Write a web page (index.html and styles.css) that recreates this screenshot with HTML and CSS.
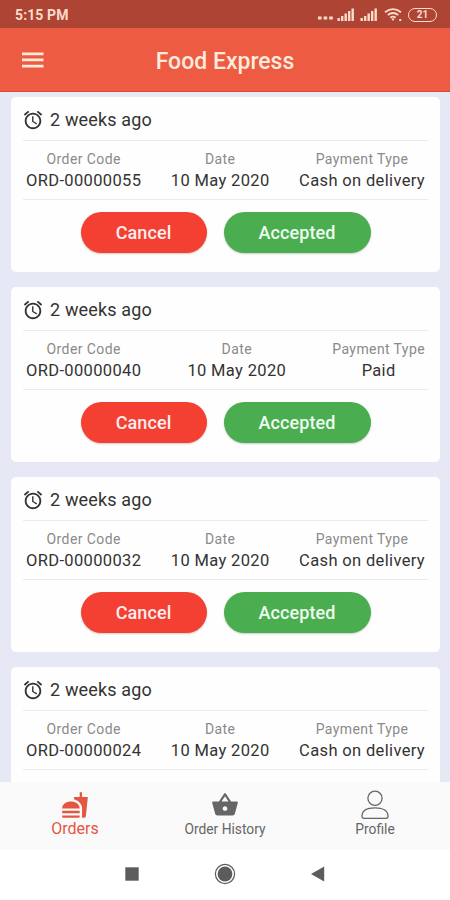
FILE: index.html
```html
<!DOCTYPE html>
<html lang="en">
<head>
    <meta charset="UTF-8">
    <meta name="viewport" content="width=device-width, initial-scale=1.0">
    <title>Food Express</title>
    <link rel="stylesheet" href="styles.css">
</head>
<body>
    <!-- Shared icons -->
    <svg class="icon-defs" aria-hidden="true">
        <symbol id="icon-alarm" viewBox="0 0 24 24">
            <path d="M22 5.72l-4.6-3.86-1.29 1.53 4.6 3.86L22 5.72zM7.88 3.39L6.6 1.86 2 5.71l1.29 1.53 4.59-3.85zM12.5 8H11v6l4.75 2.85.75-1.23-4-2.37V8zM12 4c-4.97 0-9 4.03-9 9s4.02 9 9 9 9-4.03 9-9-4.03-9-9-9zm0 16c-3.87 0-7-3.13-7-7s3.13-7 7-7 7 3.13 7 7-3.13 7-7 7z"/>
        </symbol>
        <symbol id="icon-signal" viewBox="0 0 18 13">
            <path d="M0.5 10h2.4v3H0.5zM4 8h2.4v5H4zM7.5 5.5h2.4V13H7.5zM11 3h2.4v10H11zM14.5 0.5h2.4V13h-2.4z"/>
        </symbol>
    </svg>

    <div class="status-bar">
        <span class="status-time">5:15 PM</span>
        <div class="status-icons">
            <svg class="icon-dots" viewBox="0 0 15 4"><path d="M0 0.5h3.6v3H0zM5.6 0.5h3.6v3H5.6zM11.2 0.5h3.6v3h-3.6z"/></svg>
            <svg class="icon-signal"><use href="#icon-signal"/></svg>
            <svg class="icon-signal"><use href="#icon-signal"/></svg>
            <svg class="icon-wifi" viewBox="0 0 18 13">
                <path class="wifi-arc" d="M1 4.2Q9 -2 17 4.2M3.8 7Q9 3 14.2 7M6.3 9.6Q9 7.6 11.7 9.6"/>
                <path d="M7.3 10.8Q9 9.8 10.7 10.8L9 13zM15.2 11h2v2h-2z"/>
            </svg>
            <div class="battery">21</div>
        </div>
    </div>

    <header class="app-bar">
        <svg class="menu-icon" viewBox="0 0 22 16"><path d="M0 0.5h21.5v2.7H0zM0 6.6h21.5v2.7H0zM0 12.7h21.5v2.7H0z"/></svg>
        <h1>Food Express</h1>
    </header>

    <main class="orders">
        <div class="card">
            <div class="card-time"><svg class="icon-alarm"><use href="#icon-alarm"/></svg><span>2 weeks ago</span></div>
            <div class="card-details">
                <div class="detail"><span class="label">Order Code</span><span class="value">ORD-00000055</span></div>
                <div class="detail"><span class="label">Date</span><span class="value">10 May 2020</span></div>
                <div class="detail"><span class="label">Payment Type</span><span class="value">Cash on delivery</span></div>
            </div>
            <div class="card-actions">
                <button class="btn btn-danger">Cancel</button>
                <button class="btn btn-success">Accepted</button>
            </div>
        </div>

        <div class="card">
            <div class="card-time"><svg class="icon-alarm"><use href="#icon-alarm"/></svg><span>2 weeks ago</span></div>
            <div class="card-details">
                <div class="detail"><span class="label">Order Code</span><span class="value">ORD-00000040</span></div>
                <div class="detail"><span class="label">Date</span><span class="value">10 May 2020</span></div>
                <div class="detail"><span class="label">Payment Type</span><span class="value">Paid</span></div>
            </div>
            <div class="card-actions">
                <button class="btn btn-danger">Cancel</button>
                <button class="btn btn-success">Accepted</button>
            </div>
        </div>

        <div class="card">
            <div class="card-time"><svg class="icon-alarm"><use href="#icon-alarm"/></svg><span>2 weeks ago</span></div>
            <div class="card-details">
                <div class="detail"><span class="label">Order Code</span><span class="value">ORD-00000032</span></div>
                <div class="detail"><span class="label">Date</span><span class="value">10 May 2020</span></div>
                <div class="detail"><span class="label">Payment Type</span><span class="value">Cash on delivery</span></div>
            </div>
            <div class="card-actions">
                <button class="btn btn-danger">Cancel</button>
                <button class="btn btn-success">Accepted</button>
            </div>
        </div>

        <div class="card">
            <div class="card-time"><svg class="icon-alarm"><use href="#icon-alarm"/></svg><span>2 weeks ago</span></div>
            <div class="card-details">
                <div class="detail"><span class="label">Order Code</span><span class="value">ORD-00000024</span></div>
                <div class="detail"><span class="label">Date</span><span class="value">10 May 2020</span></div>
                <div class="detail"><span class="label">Payment Type</span><span class="value">Cash on delivery</span></div>
            </div>
        </div>
    </main>

    <nav class="tab-bar">
        <a class="tab active">
            <svg class="tab-icon" viewBox="0 0 24 24"><path d="M18.06 22.99h1.66c.84 0 1.53-.64 1.63-1.46L23 5.05h-5V1h-1.97v4.05h-4.97l.3 2.34c1.71.47 3.31 1.32 4.27 2.26 1.44 1.42 2.43 2.89 2.43 5.29v8.05zM1 21.99V21h15.03v.99c0 .55-.45 1-1.01 1H2.01c-.56 0-1.01-.45-1.01-1zm15.03-7c0-8-15.03-8-15.03 0h15.03zM1.02 17h15v2h-15z"/></svg>
            <span>Orders</span>
        </a>
        <a class="tab">
            <svg class="tab-icon" viewBox="0 0 24 24"><path d="M17.21 9l-4.38-6.56c-.19-.28-.51-.42-.83-.42-.32 0-.64.14-.83.43L6.79 9H2c-.55 0-1 .45-1 1 0 .09.01.18.04.27l2.54 9.27c.23.84 1 1.46 1.92 1.46h13c.92 0 1.69-.62 1.93-1.46l2.54-9.27L23 10c0-.55-.45-1-1-1h-4.79zM9 9l3-4.4L15 9H9zm3 8c-1.1 0-2-.9-2-2s.9-2 2-2 2 .9 2 2-.9 2-2 2z"/></svg>
            <span>Order History</span>
        </a>
        <a class="tab">
            <svg class="tab-icon tab-icon-line" viewBox="0 0 28 28">
                <circle cx="14" cy="7.3" r="7.1"/>
                <path d="M1 25.2C1 19.5 6.5 16.8 14 16.8S27 19.5 27 25.2Q27 27.3 25 27.3H3Q1 27.3 1 25.2z"/>
            </svg>
            <span>Profile</span>
        </a>
    </nav>

    <div class="system-nav">
        <svg viewBox="0 0 24 24"><path d="M5.3 5.3h13.4v13.4H5.3z"/></svg>
        <svg viewBox="0 0 24 24"><circle cx="12" cy="12" r="7.4"/><circle class="ring" cx="12" cy="12" r="9.6"/></svg>
        <svg viewBox="0 0 24 24"><path d="M5 12L18.2 4.6v14.8z"/></svg>
    </div>
</body>
</html>
```
FILE: styles.css
```css
* {
    box-sizing: border-box;
    margin: 0;
    padding: 0;
}

body {
    font-family: Roboto, sans-serif;
    height: 900px;
    display: flex;
    flex-direction: column;
    overflow: hidden;
    background-color: #e6e9f5;
}

svg {
    display: block;
    flex: none;
    fill: currentColor;
}

.icon-defs {
    display: none;
}

.status-bar {
    height: 28px;
    flex: none;
    padding: 1px 13px 0 15px;
    display: flex;
    justify-content: space-between;
    align-items: center;
    background-color: #ae4434;
    color: #fbdccb;
}

.status-time {
    font-size: 14px;
    font-weight: 700;
    letter-spacing: 0.1px;
}

.status-icons {
    display: flex;
    align-items: center;
}

.icon-dots {
    width: 15px;
    height: 4px;
    margin: 7px 4px 0 0;
}

.icon-signal {
    width: 18px;
    height: 13px;
    margin-right: 5px;
}

.icon-wifi {
    width: 18px;
    height: 13px;
    margin: 0 6px 0 1px;
}

.wifi-arc {
    fill: none;
    stroke: currentColor;
    stroke-width: 1.8;
}

.battery {
    width: 29px;
    height: 14px;
    border: 1.5px solid currentColor;
    border-radius: 7px;
    font-size: 10px;
    font-weight: 700;
    line-height: 11px;
    text-align: center;
}

.app-bar {
    height: 64px;
    flex: none;
    padding-left: 22px;
    padding-right: 22px;
    display: grid;
    grid-template-columns: 22px 1fr 22px;
    align-items: center;
    background-color: #ec5b42;
    border-bottom: 1px solid #db4a33;
    color: #ffeadb;
}

.menu-icon {
    width: 22px;
    height: 16px;
}

.app-bar h1 {
    font-size: 23px;
    font-weight: 500;
    text-align: center;
    padding-top: 3px;
}

.orders {
    flex: 1;
    min-height: 0;
    overflow: hidden;
    padding: 5px 10px 0 11px;
}

.card {
    height: 175px;
    margin-bottom: 15.1px;
    padding: 0 12px;
    border-radius: 5px;
    background-color: #fefefe;
    color: #333;
}

.card-time {
    height: 43px;
    padding-top: 2px;
    display: flex;
    align-items: center;
    gap: 5px;
    font-size: 18px;
    letter-spacing: 0.15px;
}

.icon-alarm {
    width: 22px;
    height: 22px;
    margin: 1px 1px 0 -1px;
}

.card-details {
    height: 60px;
    padding: 8px 3px 0;
    display: flex;
    justify-content: space-between;
    border-top: 1px solid #ebebeb;
    border-bottom: 1px solid #ebebeb;
}

.detail {
    display: flex;
    flex-direction: column;
    align-items: center;
}

.label {
    font-size: 14px;
    line-height: 20px;
    letter-spacing: 0.4px;
    color: #8a8a8a;
}

.value {
    font-size: 16.5px;
    line-height: 24px;
    letter-spacing: 0.35px;
}

.card-actions {
    padding-top: 12px;
    display: flex;
    justify-content: center;
    gap: 17px;
}

.btn {
    height: 41px;
    border: none;
    border-radius: 21px;
    font-family: inherit;
    font-size: 18px;
    font-weight: 500;
    letter-spacing: 0.1px;
    color: #fdeeee;
    cursor: pointer;
    box-shadow: 0 1px 2px rgba(0, 0, 0, 0.2);
}

.btn-danger {
    width: 126px;
    background-color: #f44032;
}

.btn-success {
    width: 147px;
    background-color: #4aae50;
    color: #effbef;
}

.tab-bar {
    height: 68px;
    flex: none;
    display: grid;
    grid-template-columns: repeat(3, 1fr);
    background-color: #fafafa;
    color: #666;
}

.tab {
    padding-top: 9px;
    display: flex;
    flex-direction: column;
    align-items: center;
    font-size: 13.8px;
    line-height: 20px;
}

.tab.active {
    font-size: 16px;
    color: #e4563f;
}

.tab-icon {
    width: 28px;
    height: 28px;
}

.tab-icon-line {
    fill: none;
    stroke: currentColor;
    stroke-width: 1.3;
    overflow: visible;
}

.system-nav {
    height: 50px;
    flex: none;
    padding-bottom: 3px;
    display: flex;
    justify-content: center;
    align-items: center;
    gap: 69px;
    background-color: #fff;
    color: #5c5c5c;
}

.system-nav svg {
    width: 24px;
    height: 24px;
}

.ring {
    fill: none;
    stroke: currentColor;
    stroke-width: 1.2;
}
```
